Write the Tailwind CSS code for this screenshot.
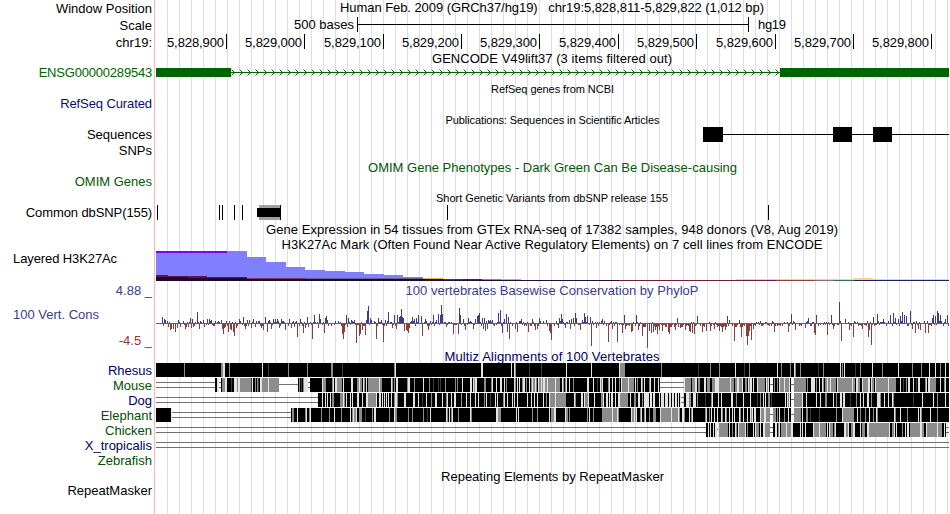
<!DOCTYPE html>
<html lang="en">
<head>
    <meta charset="UTF-8">
    <meta name="viewport" content="width=device-width, initial-scale=1.0">
    <title>Genome Browser hg19 chr19:5,828,811-5,829,822</title>
    <script src="https://cdn.jsdelivr.net/npm/@tailwindcss/browser@4"></script>
    <style>
        body { font-family: 'Liberation Sans', Arial, sans-serif; }
        .row { display: flex; align-items: center; white-space: nowrap; }
        .label { width: 152px; flex: none; text-align: right; margin-right: 4px; }
        svg { display: block; flex: none; overflow: visible; }
        svg text { white-space: pre; }
        .title text { text-anchor: middle; fill: currentColor; }
        /* guidelines every 12px, red divider after the labels */
        .guides {
            background:
                linear-gradient(#ffb4b4, #ffb4b4) 154px 0 / 1px 100% no-repeat,
                repeating-linear-gradient(to right, #dcdcf8 0 1px, #fff 1px 12px) 167px 0 / 783px 100% no-repeat;
        }
    </style>
</head>
<body class="bg-white overflow-hidden">
<main class="guides w-[950px] h-[514px] text-[13px] leading-none text-black overflow-hidden">
    <!-- Position, scale, ruler -->
    <div class="row h-4">
        <div class="label">Window Position</div>
        <svg class="title" width="793" height="16"><text x="396" y="12" textLength="424">Human Feb. 2009 (GRCh37/hg19)   chr19:5,828,811-5,829,822 (1,012 bp)</text></svg>
    </div>
    <div class="row h-[18px]">
        <div class="label">Scale</div>
        <svg width="793" height="18" shape-rendering="crispEdges">
            <path d="M201.5 1v15M592.5 1v15M202 8.5h390" stroke="#000"/>
            <text x="198" y="13" text-anchor="end" textLength="60">500 bases</text>
            <text x="602" y="13" textLength="28">hg19</text>
        </svg>
    </div>
    <div class="row h-[17px]">
        <div class="label">chr19:</div>
        <svg id="ruler" width="793" height="17" shape-rendering="crispEdges"></svg>
    </div>

    <!-- GENCODE -->
    <div class="row h-[14px]">
        <div class="label"></div>
        <svg class="title" width="793" height="14"><text x="396" y="12" textLength="240">GENCODE V49lift37 (3 items filtered out)</text></svg>
    </div>
    <div class="row h-[15px] text-[#006400]">
        <div class="label tracking-[-0.2px]">ENSG00000289543</div>
        <svg id="gene" width="793" height="15" shape-rendering="crispEdges"></svg>
    </div>

    <!-- RefSeq -->
    <div class="row h-[17px]">
        <div class="label"></div>
        <svg class="title text-[11px]" width="793" height="17"><text x="396.5" y="13" textLength="123">RefSeq genes from NCBI</text></svg>
    </div>
    <div class="row h-[13px] text-[#0c0c78]">
        <div class="label tracking-[-0.1px]">RefSeq Curated</div>
    </div>

    <!-- Publications -->
    <div class="row h-[14px] mt-[3px]">
        <div class="label"></div>
        <svg class="title text-[11px]" width="793" height="14"><text x="396.5" y="11" textLength="214">Publications: Sequences in Scientific Articles</text></svg>
    </div>
    <div class="row h-[15px]">
        <div class="label">Sequences</div>
        <svg width="793" height="15" shape-rendering="crispEdges">
            <path d="M547 0h20v15h-20zM677 0h19v15h-19zM717 0h19v15h-19zM567 7h226v1h-226z"/>
        </svg>
    </div>
    <div class="row h-[17px]">
        <div class="label">SNPs</div>
    </div>

    <!-- OMIM -->
    <div class="row h-[17px] text-[#005a00]">
        <div class="label"></div>
        <svg class="title" width="793" height="17"><text x="396.5" y="13" textLength="369">OMIM Gene Phenotypes - Dark Green Can Be Disease-causing</text></svg>
    </div>
    <div class="row h-[11px] text-[#005a00]">
        <div class="label">OMIM Genes</div>
    </div>

    <!-- dbSNP -->
    <div class="row h-[15px] mt-[3px]">
        <div class="label"></div>
        <svg class="title text-[11px]" width="793" height="15"><text x="396" y="12" textLength="232">Short Genetic Variants from dbSNP release 155</text></svg>
    </div>
    <div class="row h-[15px]">
        <div class="label tracking-[-0.1px]">Common dbSNP(155)</div>
        <svg width="793" height="15" shape-rendering="crispEdges">
            <rect x="103" width="22" height="15" fill="#a0a0a0"/>
            <rect x="101" y="3" width="23" height="9"/>
            <path d="M1.5 0v15M63.5 0v15M66.5 0v15M78.5 0v15M86.5 0v15M124.5 0v15M291.5 0v15M612.5 0v15" stroke="#000"/>
        </svg>
    </div>

    <!-- GTEx + H3K27Ac -->
    <div class="row h-[15px] mt-[2px]">
        <div class="label"></div>
        <svg class="title" width="793" height="15"><text x="396" y="12" textLength="572">Gene Expression in 54 tissues from GTEx RNA-seq of 17382 samples, 948 donors (V8, Aug 2019)</text></svg>
    </div>
    <div class="row h-[14px]">
        <div class="label"></div>
        <svg class="title" width="793" height="14"><text x="396" y="12" textLength="541">H3K27Ac Mark (Often Found Near Active Regulatory Elements) on 7 cell lines from ENCODE</text></svg>
    </div>
    <div class="row h-[30px]">
        <div class="label !text-left pl-[13px] pb-[15px] tracking-[-0.1px]">Layered H3K27Ac</div>
        <svg width="793" height="30" shape-rendering="crispEdges">
            <path fill="#8080ff" d="M0 0H91V6H110V11H130V16H149V19H169V20H189V21H208V23H228V24H247V26H267V30H0z"/>
            <path fill="#8000ff" d="M0 0H71V2H0z"/>
            <path fill="#5c1450" d="M0 24H12V25H51V26H91V27H150V28H228V30H0z"/>
            <path fill="#7c3c58" d="M91 27H247V28H91z"/>
            <path fill="#5c6890" d="M149 27H267V28H149z"/>
            <path fill="#20082c" d="M0 26H32V27H91V28H300V29H591V30H0z"/>
            <path fill="#e8b850" d="M267 27H287V28H267z"/>
            <path fill="#702828" d="M287 28H306V29H287z"/>
            <path fill="#183450" d="M306 28H326V29H306z"/>
            <path fill="#70a070" d="M326 28H345V29H326z"/>
            <path fill="#80c0f0" d="M345 28H365V29H345z"/>
            <path fill="#280c38" d="M267 29H463V30H267z"/>
            <path fill="#781838" d="M463 29H620V30H463z"/>
            <path fill="#904030" d="M620 29H659V30H620z"/>
            <path fill="#906878" d="M659 29H678V30H659z"/>
            <path fill="#307050" d="M678 29H698V30H678z"/>
            <path fill="#182460" d="M698 29H793V30H698z"/>
            <path fill="#ffd080" d="M580 28H698V27H717V28H793V29H580z"/>
        </svg>
    </div>

    <!-- PhyloP conservation -->
    <div class="row h-[15px] mt-[2px] text-[#3c3c8c]">
        <div class="label pb-px">4.88 _</div>
        <svg class="title" width="793" height="15"><text x="396" y="12" textLength="293">100 vertebrates Basewise Conservation by PhyloP</text></svg>
    </div>
    <div class="row h-[51px]">
        <div class="label flex flex-col justify-between h-full pt-[10px] pb-[2px]">
            <div class="text-left pl-[13px] text-[#3c3c8c]">100 Vert. Cons</div>
            <div class="text-[#8c3c3c]">-4.5 _</div>
        </div>
        <svg id="cons" width="793" height="51" shape-rendering="crispEdges"></svg>
    </div>

    <!-- Multiz -->
    <div class="row h-[14px] text-[#000064]">
        <div class="label"></div>
        <svg class="title" width="793" height="14"><text x="396" y="12" textLength="215">Multiz Alignments of 100 Vertebrates</text></svg>
    </div>
    <div class="row h-[105px]">
        <div class="label leading-[15px] text-[#000064] pb-px">
            <div>Rhesus</div>
            <div class="text-[#005000]">Mouse</div>
            <div>Dog</div>
            <div class="text-[#005000]">Elephant</div>
            <div class="text-[#005000]">Chicken</div>
            <div>X_tropicalis</div>
            <div class="text-[#005000]">Zebrafish</div>
        </div>
        <svg id="multiz" width="793" height="105" shape-rendering="crispEdges"></svg>
    </div>

    <!-- RepeatMasker -->
    <div class="row h-[16px]">
        <div class="label"></div>
        <svg class="title" width="793" height="16"><text x="396.5" y="13" textLength="223">Repeating Elements by RepeatMasker</text></svg>
    </div>
    <div class="row h-[13px]">
        <div class="label">RepeatMasker</div>
    </div>
</main>

<script>
    const X0 = 156; // left edge of the tracks
    const rect = (x, y, w, h, fill) => `<rect x="${x - X0}" y="${y}" width="${w}" height="${h}" fill="${fill}"/>`;

    // Ruler
    const ticks = [226, 304, 383, 461, 539, 618, 696, 775, 853, 931];
    document.getElementById('ruler').innerHTML = ticks.map((x, i) => {
        const pos = (5828900 + i * 100).toLocaleString('en-US');
        return rect(x, 0, 1, 15, '#000') + `<text x="${x - X0 - 2}" y="13" text-anchor="end" textLength="57">${pos}</text>`;
    }).join('');

    // Gene: two exons with an intron between them
    let gene = rect(156, 3, 75, 9, '#006400') + rect(780, 3, 169, 9, '#006400') + rect(231, 7, 549, 1, '#006400');
    for (let x = 232; x < 780; x += 8) {
        gene += rect(x, 5, 1, 1, '#006400') + rect(x + 1, 6, 1, 1, '#006400') + rect(x + 1, 8, 1, 1, '#006400') + rect(x, 9, 1, 1, '#006400');
        gene += rect(x - 1, 4, 1, 1, '#a0c8a0') + rect(x - 1, 10, 1, 1, '#a0c8a0');
    }
    document.getElementById('gene').innerHTML = gene;

    // Conservation: x:height, positive up
    const up = '162:6 164:4 165:3 167:2 178:3 183:2 188:2 190:5 192:4 197:11 200:2 203:3 207:4 209:4 211:3 213:3 215:2 221:3 223:3 229:2 239:4 240:2 243:6 247:3 249:3 253:4 258:2 265:6 269:3 271:4 273:4 275:4 277:4 279:5 281:4 285:3 289:4 296:2 300:4 305:5 307:6 312:3 314:8 318:8 319:9 320:4 ' +
        '325:5 326:7 327:3 346:8 348:5 351:3 354:3 366:3 367:12 368:17 370:5 371:3 378:5 381:3 385:3 388:11 394:8 397:8 399:6 400:7 401:14 402:6 403:5 409:3 412:6 414:4 416:5 418:8 421:7 425:4 428:8 433:8 436:3 438:9 440:8 441:18 442:9 459:15 460:8 463:4 465:3 468:5 473:5 475:4 477:7 478:8 479:10 482:5 483:14 484:5 488:3 490:3 492:3 498:10 500:13 504:4 506:9 508:6 515:3 521:4 532:4 539:5 546:3 556:2 558:15 559:5 561:9 562:4 569:3 571:4 573:5 575:10 576:5 580:4 582:3 584:10 585:6 587:7 590:6 602:4 612:3 624:8 636:8 677:5 697:7 727:7 729:3 739:3 772:2 791:9 808:5 816:8 831:8 839:21 845:4 873:6 877:9 883:4 890:8 893:10 895:5 898:4 900:7 902:11 904:8 906:7 910:12 932:5 933:8 935:7 937:12 938:10 940:8 945:4 947:8';
    const down = '168:3 170:6 171:5 173:5 175:8 177:4 180:3 185:5 186:3 188:3 191:4 193:3 199:5 204:3 213:2 222:5 223:10 224:4 225:3 228:8 230:5 231:6 233:8 234:12 236:4 245:5 251:4 255:3 261:4 263:6 267:8 271:5 279:4 285:6 291:4 294:3 297:13 303:9 305:4 308:3 312:15 318:4 ' +
        '324:9 342:10 343:15 344:8 347:3 356:19 359:12 360:10 362:6 365:11 376:15 383:18 392:4 396:5 404:7 406:6 407:7 408:9 409:4 422:12 428:6 446:3 453:10 458:10 465:6 473:5 483:5 485:7 487:5 502:9 507:8 509:15 515:5 517:8 528:8 535:6 537:5 549:7 550:9 551:16 558:4 565:4 570:5 580:6 591:22 596:4 608:18 612:5 617:18 622:9 625:5 631:8 632:7 638:6 642:12 647:22 649:7 651:9 653:8 655:6 657:10 659:6 662:7 668:8 669:10 675:6 680:4 685:6 689:7 690:8 692:9 694:10 702:8 706:7 710:7 714:5 719:7 722:8 725:6 734:17 741:13 746:12 747:21 748:12 749:7 751:16 753:5 774:8 788:8 795:6 805:4 814:9 815:11 827:11 833:5 841:17 849:6 853:13 862:5 868:13 869:6 871:21 912:5 915:9 918:5 920:6 925:9 928:9';
    const heights = {};
    up.split(' ').forEach(p => { const [x, h] = p.split(':'); heights[x] = +h; });
    down.split(' ').forEach(p => { const [x, h] = p.split(':'); heights[x] = -h; });
    let cons = rect(156, 25, 793, 1, '#8c5050');
    for (let x = 162; x < 949; x++) {
        let h = heights[x];
        if (h === undefined) {
            const r = (x * 7919 + (x * x) % 97 * 31) % 11; // low background signal
            h = [0, 1, -2, 1, -2, 0, -1, 2, -1, 1, 0][r];
            if (x > 640 && x < 756) h -= 1;
        }
        if (h > 0) cons += rect(x, 25 - h, 1, h, '#3c3c8c');
        if (h < 0) cons += rect(x, 26, 1, -h, '#8c3c3c');
    }
    cons += rect(647, 48, 1, 2, '#ff00ff');
    document.getElementById('cons').innerHTML = cons;

    // Alignments: run lengths by shade, '-' is a single and '=' a double line.
    // Each segment is stretched to reach the start of the next one.
    const shades = { k: '#000', d: '#3c3c3c', g: '#8c8c8c', w: '#e4e4e4' };
    const rows = [
        [[156, 'k28 g1 k36 g2 w2 k4 g1 k32 w1 k5 d1 k19 g1 k18 g1 k23 g2 k9 d1 k7'],
         [350, 'k40 g1 w1 k77 w1 k26 w1 k1 w1 g1 k12 d1 k10 d1 k7'],
         [550, 'k16 w1 k24 w1 k27 w1 g5 k36 g1 k36 d1 k11 g1 k8 g1 k15 w1 k8 d1 k4 g1'],
         [750, 'k27 w1 k3 g1 k8 g1 k3 w1 g1 k4 g1 k17 d1 k4 g1 k16 w1 k1 g1 k1 w1 k10 d1 k4 g1 k11 w1 k9 g1 k15 w1 k13 g1 k8 g1 k7 w1 k5 w1 k4 g1 k4 w1 k3']],
        [[156, '=59'],
         [215, 'k2 w2 =2 k1 g3 w2 k4 d1 k2 w3 g1 w2 g12 d1 w1 k2 g1 k1 g1 d1 k1 w2 g6 w1 g10'],
         [279, '-19'],
         [298, 'k1 g1 k1 d1 k1 g1 w4 =2 k12 w1 g2 k6 g1 w1 k1 w2 g5 k1 w1 k6'],
         [350, 'k1 w2 k4 g2 w1 g2 k1 w1 g1 k1 w1 k1 g11 w1 g2 k9 w1 g1 k1 g1 k1 w2 k9 g1 w2 k4 g1 k8 w1 k5 g1 k3 d1 k4 d1 k1 d1 k4 g1 k8 g1 k1 g1 k4 w1 k7 w2 k1 w1 g1 w2 k7 g2 k5 g1 w1 k3 w1 k3 w2 k2 w1 k1 g1 k7 w1 g1 k1 w1 k1 w1 k2 g1 w2 k1 g1 k2 w1 k1 g1 w1 g2 w1 g1 k1 w1 g2 w1 g1 w2 g2 w1 g2'],
         [550, 'g5 w1 g4 k1 w1 g1 k1 g1 w1 k2 w1 k3 g1 k12 w2 k4 w1 k3 d1 k2 w1 g1 w1 k4 g1 w1 k2 w1 k2 w1 k3'],
         [619, 'g1 k1 w1 g5 w1 g4 k1 w1 k1 g1 k2 w1 g1 k1 w1 k3 g1 w1 k3 w1 k2 w1 k1'],
         [660, '=24'],
         [684, 'w1 g5 k1 g3 w1 k1 g2 k4 w1 k1 g3 k2 g2 w4 g9 w1 g3 k1 g2 w1 g3 w1 k2 g1 k1 w1 g1'],
         [750, 'w2 k1 w1 k3 w1 g7 k1 w1 g1 w1 k1'],
         [770, '-3'],
         [773, 'k1 g1 k2 g1 k1 w1 g5 w1 g4 w1 k1'],
         [791, '-3'],
         [794, 'g12 k1 g1 k3 w4 k1 g1 k2 w1 k2 w1 g2 k1 g2 w1 g2 w1 g5 k1 w1 g14'],
         [852, 'w1 g2 k1 w2 g2 k2 w1 g4 w2 k1 w1 g2 k1 w1'],
         [876, 'g12 w1 g7 k4 w1 k2 d1 k2 g1 k1 w2 k3 w1 k2 d1 k1 w2 k5 g1 w1 k1 w2 g6 k4 w1 k3 g1 w1 k3']],
        [[156, '=162'],
         [318, 'k4 w1 k2 w1 k1 w1 k2 w1 k1 g2 k6 g3 w1 g1 k1 w1 k3'],
         [350, 'w1 k1 w1 k4 w2 k2 w1 k3 w2 g8 w1 k2 w1 k1 w1 k1 w1 k1 w1 k1 w1 k2 w1 k2 g1 w2 g1 k5 w2 k7 w2 k3 w1 k2 d1 k3 w1 k4 g1 k3 w2 k4 w1 k3 g1 w1 k3 w1 k2 w2 k4 g1 k4 w1 k3 w1 k4 w1 k2 w1 k4 g1 k1 w1 k3 d1 k4 w1 k1 w1 k4 g1 w1 k2 w1 k4 w1 k1 w1 k2 w1 k8 w1 k3 w1 k2 w1 k2 w1 k4 w1 k2 g1 k2 w1'],
         [550, 'g4 w1 g8 k6 w1 g1 k4 w1 k1 w1 g2 w1 k4 w1 k5 g1 w1 k2 w1 k1 w1 k1 w1 k2 w1 k1 w2'],
         [620, 'g7 k2 w1 k3 g1 k2 w2 k2 g1 k1 w4 k1 w2 k1 w2 k3 w1 k1 w3 k1 w2 k1 w2 k1 w2 k1 w1 k1 w1 k1 w1'],
         [681, '=3'],
         [684, 'k2 w2 g2 k2 w2 k1 g1 k6 d1 k4 g1 w1 k4 w1 k2 w1 k8 w1 k3 g1 k5 w1 k5'],
         [750, 'w1 k6 d1 k2 g1 k2 w1 k1 w1 k2 g2 k1 d1 k13 w1 k1 w1 g1 w1 k1'],
         [791, '-3'],
         [794, 'g7 w1 k3 w1 k8 w1 k3 w1 k4 g1 k6 w1 k2 g1 k2 w2 k1 w2 k5 d1 k4 g1 k3 w1 k2 w1 k2 w2 k2 g1 k5 w2 g1 k3 w1 k3 w1 k2 w1 g1 k18 d1 k7 w1 k9 w1 k3 g1 k6 w1 k3']],
        [[156, 'k15'],
         [171, 'w1 =119'],
         [291, 'k1 g2 k3 w1 k7 g1 w1 k2 g1 w1 k10 g1 k7 g1 k4 w1 k6 g1 k8'],
         [350, 'w1 k1 g1 w1 g2 w1 k2 g2 k3 d1 k6 g1 k1 w2 k12 g1 k4 w1 g2 k10 g1 k3 g1 k9 g1 k3 d1 k2 w1 k14 w1 g1 k1 w1 k1 g1 w1 k5 g1 k10 w1 g1 k23 w2 g2 k15 w1 k1 w1 k12 g1 k4 g1 k10 w1'],
         [550, 'k1 g3 w2 k9 w1 g2 k1 g1 k16 g1 k1 w1 k3 g1 k8'],
         [602, 'g9 w1 g4 w1 g1 k11 w1 g2 w1 g1 w1 k2 g1 w1 k2 g1 w1 k3 g1 k3 g2 k4 w1'],
         [661, 'g10 w1 g6 w1 g1 k2 w1 g1 k4 w1 k1 g1 w1 k12'],
         [705, 'g1 w1 k2 g1 k1 w1 k2 w1 k2 w1 k3 w1 g1 k2 w1 g1 k2 w1 k2 w1 k1 w1 k4 w1 g1 k2 w1 k3 w1 k2'],
         [750, 'w1 g1 w1 k1 w1 k4 w1 g3 w1 g4'],
         [770, '-3'],
         [773, 'g3 k1 g1 k1 w1 k3 g1 k3 w1 k2'],
         [791, '-3'],
         [794, 'g7 k1 w1 k3 g1 k2 d1 k8 d1 k15 g1 k5 w1 g11 k3 w1 k1 g1 k4 g1 k3 w1 k3 g1 k2 w1 g1 k15 w1 g1 k4 w1 k6 g1 k9 w1 k1 w1 g1 k8 w1 k5 g1 k11']],
        [[156, '=550'],
         [706, 'k2 w1 k1 w1 k2 w1 k1 w2 -1 w1'],
         [719, 'g8 k1 w1 k2 g1 k2 w1 g1 k1 w1 g5 w1 k1 g1 k2'],
         [750, 'k2 w1 k1 w1 g2 k1 w1 k1 w2 g4'],
         [770, '=3'],
         [773, 'k2 w1 k1 g1 w1 k1 g4 w1 g3 w2 k6 w1 k1 w1 k1 w1 k6 w1 g4 w1 g5 k1 w1 k1 w1 g2 k1 g1 w1 k7 w1 g2 w1 k2 g1 w2 k4 w1 k1 g3 k1 w2 g6'],
         [876, 'g12 w1 k1 g2 w1 k1 w1 k4 g1 k2 w1 k1 w2 k1 g9 w1 g2 k2 w1 g9 w1 g3 k2 w1 k1'],
         [946, '=3']],
        [[156, '=793']]
    ];
    let align = '';
    rows.forEach((segments, row) => {
        const y = row * 15;
        segments.forEach(([start, list], i) => {
            const end = i + 1 < segments.length ? segments[i + 1][0] : 949;
            const runs = list.split(' ');
            const total = runs.reduce((sum, run) => sum + +run.slice(1), 0);
            let pos = 0;
            runs.forEach(run => {
                const x = start + Math.round(pos * (end - start) / total);
                pos += +run.slice(1);
                const w = start + Math.round(pos * (end - start) / total) - x;
                if (run[0] === '-') {
                    align += rect(x, y, w, 14, '#fff') + rect(x, y + 6, w, 1, '#707070');
                } else if (run[0] === '=') {
                    align += rect(x, y + 4, w, 1, '#707070') + rect(x, y + 9, w, 1, '#707070');
                } else {
                    align += rect(x, y, w, 14, shades[run[0]]);
                }
            });
        });
    });
    document.getElementById('multiz').innerHTML = align;
</script>
</body>
</html>
